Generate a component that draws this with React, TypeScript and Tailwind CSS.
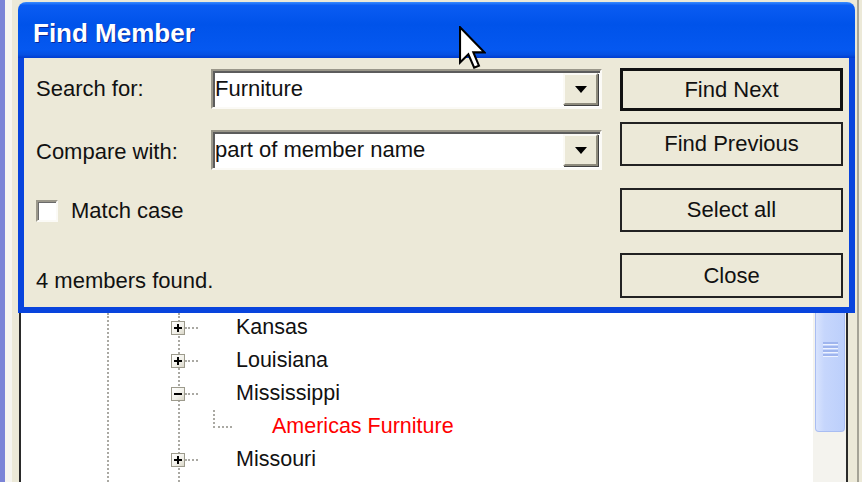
import React from "react";

function Expander({ minus }: { minus?: boolean }) {
  return (
    <div className="-ml-[9px] w-[14px] h-[14px] shrink-0 border border-[#9c9a8c] bg-[linear-gradient(135deg,#ffffff_0%,#f0efe8_60%,#d9d6c8_100%)] flex items-center justify-center relative">
      <div className="w-[8px] h-[2px] bg-black" />
      {!minus && <div className="absolute w-[2px] h-[8px] bg-black" />}
    </div>
  );
}

function TreeRow({ label, minus }: { label: string; minus?: boolean }) {
  return (
    <div className="h-[33px] flex items-center shrink-0">
      <Expander minus={minus} />
      <div className="w-[13px] border-t-2 border-dotted border-[#aaa9a3]" />
      <div className="ml-[38px] text-[21.5px] leading-none text-[#111] whitespace-nowrap">{label}</div>
    </div>
  );
}

function Combo({ value }: { value: string }) {
  return (
    <div className="w-[391px] h-[40px] flex bg-white border-2 border-t-[#9a978a] border-l-[#9a978a] border-b-[#fbfaf6] border-r-[#fbfaf6] shadow-[inset_2px_2px_0_#5c5c5c]">
      <div className="flex-1 flex items-center pl-[2px] text-[22px] leading-none text-[#111] whitespace-nowrap">{value}</div>
      <div className="w-[35px] my-[2px] mr-[2px] bg-[#ece9d8] border-2 border-t-[#fbfaf5] border-l-[#fbfaf5] border-b-[#8d8a7c] border-r-[#8d8a7c] shadow-[1px_1px_0_#404040] flex items-center justify-center">
        <svg width="12" height="7" viewBox="0 0 12 7">
          <polygon points="0,0 12,0 6,7" fill="#000" />
        </svg>
      </div>
    </div>
  );
}

function Btn({ label, def, cls }: { label: string; def?: boolean; cls: string }) {
  return (
    <div
      className={
        cls +
        " flex items-center justify-center text-[22px] leading-none text-[#111] bg-[#ece9d8] whitespace-nowrap " +
        (def ? "border-[3px] border-[#111]" : "border-2 border-[#222]")
      }
    >
      {label}
    </div>
  );
}

function Dialog() {
  return (
    <div className="h-[311px] flex flex-col shrink-0">
      <div className="h-[56px] rounded-t-[8px] bg-[linear-gradient(to_bottom,#3a8dff_0%,#0a5cf2_6%,#0053ea_40%,#0558f0_85%,#0650e2_94%,#003ccf_100%)] flex items-center pl-[15px] pt-[6px]">
        <span className="text-white font-bold text-[26px] leading-none [text-shadow:1px_1px_0_#0a2a9a]">
          Find Member
        </span>
      </div>
      <div className="flex-1 border-x-[6px] border-b-[6px] border-[#0844dd] bg-[#ece9d8] flex pl-[12px] pr-[6px] pt-[10px]">
        <div className="w-[566px] flex flex-col pt-[1px]">
          <div className="h-[40px] flex items-center">
            <div className="w-[175px] text-[22px] leading-none text-[#111]">Search for:</div>
            <Combo value="Furniture" />
          </div>
          <div className="h-[40px] mt-[21px] flex items-center">
            <div className="w-[175px] text-[22px] leading-none text-[#111] pt-[4px]">Compare with:</div>
            <Combo value="part of member name" />
          </div>
          <div className="h-[24px] mt-[29px] flex items-center">
            <div className="w-[22px] h-[22px] bg-white border-2 border-t-[#9a978a] border-l-[#9a978a] border-b-[#fbfaf6] border-r-[#fbfaf6] shadow-[inset_1px_1px_0_#6a6a6a]" />
            <div className="ml-[13px] text-[22px] leading-none text-[#111]">Match case</div>
          </div>
          <div className="h-[26px] mt-[45px] flex items-center">
            <div className="text-[22px] leading-none text-[#111]">4 members found.</div>
          </div>
        </div>
        <div className="ml-[18px] w-[223px] flex flex-col">
          <Btn label="Find Next" def cls="h-[43px]" />
          <Btn label="Find Previous" cls="h-[44px] mt-[11px]" />
          <Btn label="Select all" cls="h-[44px] mt-[22px]" />
          <Btn label="Close" cls="h-[45px] mt-[21px]" />
        </div>
      </div>
    </div>
  );
}

function Scrollbar() {
  return (
    <div className="w-[33px] shrink-0 bg-[#f4f3ee] flex flex-col">
      <div className="ml-[2px] w-[30px] h-[119px] rounded-b-[4px] border-x border-b border-[#a9bdf2] bg-[linear-gradient(to_right,#d8e3fd_0%,#c6d6fc_30%,#bccffb_100%)] flex flex-col items-center pt-[29px]">
        <div className="w-[15px] h-[2px] bg-[#9fb5ee] shadow-[0_1px_0_#eef3ff]" />
        <div className="w-[15px] h-[2px] mt-[2px] bg-[#9fb5ee] shadow-[0_1px_0_#eef3ff]" />
        <div className="w-[15px] h-[2px] mt-[2px] bg-[#9fb5ee] shadow-[0_1px_0_#eef3ff]" />
        <div className="w-[15px] h-[2px] mt-[2px] bg-[#9fb5ee] shadow-[0_1px_0_#eef3ff]" />
      </div>
    </div>
  );
}

function Tree() {
  return (
    <div className="flex-1 flex min-h-0">
      <div className="w-[1px] shrink-0" />
      <div className="w-[2px] shrink-0 bg-[#2a2a2a]" />
      <div className="w-[792px] shrink-0 bg-white flex overflow-hidden">
        <div className="w-[86px] shrink-0" />
        <div className="border-l-2 border-dotted border-[#aaa9a3] flex-1 flex">
          <div className="w-[69px] shrink-0" />
          <div className="border-l-2 border-dotted border-[#aaa9a3] flex-1 flex flex-col pt-0">
            <div className="-mt-[2px]" />
            <TreeRow label="Kansas" />
            <TreeRow label="Louisiana" />
            <TreeRow label="Mississippi" minus />
            <div className="h-[33px] flex shrink-0">
              <div className="ml-[33px] w-[19px] h-[18px] shrink-0 border-l-2 border-b-2 border-dotted border-[#aaa9a3]" />
              <div className="ml-[40px] self-center text-[21.5px] leading-none text-[#ff0000] whitespace-nowrap">Americas Furniture</div>
            </div>
            <TreeRow label="Missouri" />
          </div>
        </div>
      </div>
      <Scrollbar />
      <div className="w-[2px] shrink-0 bg-[#2a2a2a]" />
      <div className="w-[7px] shrink-0" />
    </div>
  );
}

export default function App() {
  return (
    <div className="w-[862px] h-[482px] overflow-hidden relative flex bg-[#ece9d8] font-['Liberation_Sans',Arial,sans-serif]">
      <div className="w-[5px] shrink-0 bg-[#7b84d7]" />
      <div className="w-[7px] shrink-0 bg-[#f6f5f0]" />
      <div className="w-[6px] shrink-0 bg-[#ece9d8]" />
      <div className="w-[837px] shrink-0 flex flex-col">
        <div className="h-[2px] shrink-0" />
        <Dialog />
        <Tree />
      </div>
      <div className="flex-1 flex">
        <div className="w-[2px]" />
        <div className="w-[2px] bg-[#a5a396]" />
      </div>
      <svg
        className="absolute left-[459px] top-[26px]"
        width="27"
        height="44"
        viewBox="0 0 13 21"
      >
        <path
          d="M0.5 0.5 L0.5 17.5 L4.5 13.5 L7.3 20 L9.6 19 L6.9 12.6 L12.2 12.6 Z"
          fill="#fff"
          stroke="#000"
          strokeWidth="1"
          strokeLinejoin="miter"
        />
      </svg>
    </div>
  );
}
